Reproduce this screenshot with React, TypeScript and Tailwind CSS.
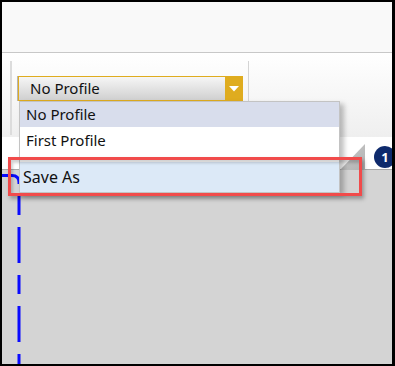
import React from "react";

const font = { fontFamily: '"Noto Sans", "Open Sans", Arial, sans-serif' };

export default function App() {
  return (
    <div
      className="w-[395px] h-[366px] border-2 border-r-[3px] border-black bg-white"
      style={font}
    >
      <div className="relative flex flex-col w-full h-full overflow-hidden">
        {/* top bar */}
        <div className="h-[51px] shrink-0 bg-[#f9f9f9] border-b border-[#c8c8c8]" />

        {/* ribbon group */}
        <div className="h-[84px] shrink-0 flex items-start pt-[8px] pl-[8px] bg-gradient-to-b from-white to-[#efefef]">
          <div className="w-[2px] h-[74px] bg-[#dcdcdc]" />
          <div className="ml-[6px] pt-[15px]">
            <div className="w-[225px] h-[25px] flex border border-[#dfac1f] shadow-[-1px_0_0_#b5b5b5]">
              <div className="flex-1 flex items-center pl-[11px] bg-gradient-to-b from-[#f6f6f6] to-[#d0d0d0] text-[15px] text-[#111]">
                No Profile
              </div>
              <div className="w-[17px] flex items-center justify-center bg-[#dfac1f]">
                <svg width="10" height="6" viewBox="0 0 10 6">
                  <path d="M0 0H10L5 5.5Z" fill="#fff" />
                </svg>
              </div>
            </div>
          </div>
          <div className="ml-[5px] w-[1px] h-[74px] bg-[#d4d4d4]" />
        </div>

        {/* tab strip */}
        <div className="h-[33px] shrink-0 flex justify-end items-start bg-white border-b border-[#a9a9a9]">
          <svg width="25" height="26" viewBox="0 0 25 26" className="mt-[7px]">
            <defs>
              <linearGradient id="tri" x1="0" y1="0" x2="1" y2="1">
                <stop offset="0" stopColor="#c9c9c9" />
                <stop offset="1" stopColor="#b3b3b3" />
              </linearGradient>
            </defs>
            <path d="M0 26L25 0V26Z" fill="url(#tri)" />
          </svg>
          <div className="ml-[9px] -mr-[4px] mt-[9px] w-[22px] h-[22px] rounded-full bg-[#0e2a6c] flex items-center justify-center text-white text-[13px] font-bold leading-none">
            1
          </div>
        </div>

        {/* canvas */}
        <div className="relative flex-1 bg-[#d4d4d4]">
          <svg width="30" height="200" className="absolute left-0 top-0">
            <path
              d="M0 5.5H10Q17 5.5 17 12.5V200"
              fill="none"
              stroke="#0a0aff"
              strokeWidth="3"
              strokeDasharray="36 12 19 12"
              strokeDashoffset="13.5"
            />
          </svg>
        </div>

        {/* dropdown list */}
        <div className="absolute left-[17px] top-[99px] w-[321px] border border-[#c3c3c3] bg-white shadow-[4px_3px_5px_rgba(0,0,0,0.25)] text-[15px] text-[#111]">
          <div className="h-[25px] flex items-center pl-[6px] bg-[#d8ddec]">No Profile</div>
          <div className="h-[26px] flex items-center pl-[6px]">First Profile</div>
          <div className="h-[9px]" />
          <div className="h-[30px] flex items-center pl-[3px] bg-[#dce9f7] text-[16px]">Save As</div>
        </div>

        {/* annotation box */}
        <div className="absolute left-[6px] top-[155px] w-[354px] h-[39px] border-[3px] border-[#f14b4b] shadow-[2px_3px_4px_rgba(0,0,0,0.3),inset_2px_3px_3px_rgba(0,0,0,0.18)]" />
      </div>
    </div>
  );
}
